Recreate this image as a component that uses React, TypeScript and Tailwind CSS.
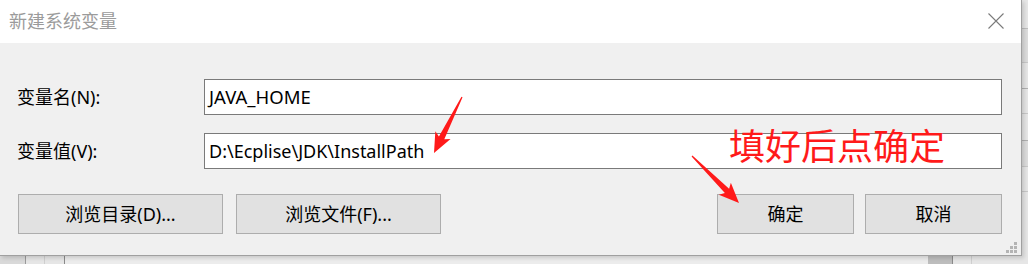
import React from "react";

const FONT = { fontFamily: '"Noto Sans", "Noto Sans CJK SC", sans-serif' };

function Arrow({ x1, y1, x2, y2 }: { x1: number; y1: number; x2: number; y2: number }) {
  const dx = x2 - x1;
  const dy = y2 - y1;
  const L = Math.sqrt(dx * dx + dy * dy);
  const ang = (Math.atan2(dy, dx) * 180) / Math.PI;
  const pts = [
    [0, -0.6],
    [L - 17, -3],
    [L - 20, -8.5],
    [L, 0],
    [L - 20, 8.5],
    [L - 17, 3],
    [0, 0.6],
  ]
    .map((p) => p.join(","))
    .join(" ");
  return (
    <g transform={`translate(${x1},${y1}) rotate(${ang})`}>
      <polygon points={pts} fill="#ff1a1a" />
    </g>
  );
}

function Btn({ label, w }: { label: string; w: string }) {
  return (
    <div
      className={`${w} h-[40px] flex items-center justify-center bg-[#e1e1e1] border border-[#adadad] text-[18px] text-black`}
    >
      {label}
    </div>
  );
}

export default function App() {
  return (
    <div className="relative w-[1028px] h-[264px] overflow-hidden bg-[#e3e3e3]" style={FONT}>
      {/* background behind dialog */}
      <div className="absolute left-0 top-[256px] w-[1028px] h-[8px] flex">
        <div className="w-[26px] h-full bg-[#d9d9d9] border-r border-[#9a9a9a]" />
        <div className="w-[19px] h-full bg-[#e6e6e6] border-r border-[#cfcfcf]" />
        <div className="w-[20px] h-full bg-[#e6e6e6] border-r border-[#8a8a8a]" />
        <div className="w-[863px] h-full bg-[#ececec]" />
        <div className="w-[25px] h-full bg-[#bdbdbd] border-r border-[#8a8a8a]" />
        <div className="w-[19px] h-full bg-[#e6e6e6] border-r border-[#cfcfcf]" />
        <div className="flex-1 h-full bg-[#e6e6e6]" />
      </div>
      <div className="absolute left-[1022px] top-0 w-[6px] h-[256px] flex flex-col bg-[#e6e6e6]">
        <div className="h-[29px] border-b border-[#bdbdbd]" />
        <div className="h-[34px] border-b border-[#c8c8c8] bg-[#dcdcdc]" />
        <div className="h-[26px] border-b border-[#b0b0b0]" />
        <div className="h-[25px] border-b border-[#c8c8c8]" />
        <div className="h-[27px] border-b border-[#b0b0b0]" />
        <div className="h-[26px] border-b border-[#c8c8c8] bg-[#dcdcdc]" />
        <div className="h-[25px] border-b border-[#c8c8c8]" />
        <div className="flex-1" />
      </div>

      {/* dialog */}
      <div className="relative w-[1022px] h-[256px] flex flex-col bg-[#f0f0f0] border-r border-b border-[#a0a0a0] shadow-[2px_2px_4px_rgba(0,0,0,0.15)]">
        <div className="h-[43px] bg-white flex items-center justify-between pl-[9px] pr-[17px]">
          <span className="text-[18px] text-[#9b9b9b] leading-none -mt-[2px]">新建系统变量</span>
          <svg width="16" height="16" viewBox="0 0 16 16" className="-mt-[2px]">
            <path d="M0.5 0.5 L15.5 15.5 M15.5 0.5 L0.5 15.5" stroke="#7a7a7a" strokeWidth="1.1" fill="none" />
          </svg>
        </div>
        <div className="flex-1 flex flex-col pt-[36px] pl-[17px] pr-[19px]">
          <div className="flex items-center h-[36px]">
            <div className="w-[187px] text-[18px] text-black">变量名(N):</div>
            <div className="flex-1 h-[36px] bg-white border border-[#7a7a7a] flex items-center pl-[4px] text-[18.5px] text-black">
              JAVA_HOME
            </div>
          </div>
          <div className="flex items-center h-[36px] mt-[18px]">
            <div className="w-[187px] text-[18px] text-black">变量值(V):</div>
            <div className="flex-1 h-[36px] bg-white border border-[#7a7a7a] flex items-center pl-[4px] text-[18px] text-black">
              D:\Ecplise\JDK\InstallPath
            </div>
          </div>
          <div className="flex items-center mt-[25px] pl-[1px]">
            <Btn label="浏览目录(D)..." w="w-[205px]" />
            <div className="w-[13px]" />
            <Btn label="浏览文件(F)..." w="w-[205px]" />
            <div className="flex-1" />
            <Btn label="确定" w="w-[137px]" />
            <div className="w-[11px]" />
            <Btn label="取消" w="w-[137px]" />
          </div>
        </div>
        {/* resize grip */}
        <svg className="absolute left-[1006px] top-[242px]" width="12" height="12" viewBox="0 0 12 12">
          <rect x="8" y="0" width="3" height="3" fill="#b4b4b4" />
          <rect x="4" y="4" width="3" height="3" fill="#b4b4b4" />
          <rect x="8" y="4" width="3" height="3" fill="#b4b4b4" />
          <rect x="0" y="8" width="3" height="3" fill="#b4b4b4" />
          <rect x="4" y="8" width="3" height="3" fill="#b4b4b4" />
          <rect x="8" y="8" width="3" height="3" fill="#b4b4b4" />
        </svg>
      </div>

      {/* annotation */}
      <div className="absolute left-[729px] top-[120px] text-[36px] leading-[48px] text-[#ff1a1a]" style={{ fontFamily: '"Noto Sans CJK SC", sans-serif' }}>
        填好后点确定
      </div>
      <svg className="absolute left-0 top-0 pointer-events-none" width="1028" height="264">
        <Arrow x1={462} y1={97} x2={434} y2={153} />
        <Arrow x1={692} y1={156} x2={739} y2={203} />
      </svg>
    </div>
  );
}
